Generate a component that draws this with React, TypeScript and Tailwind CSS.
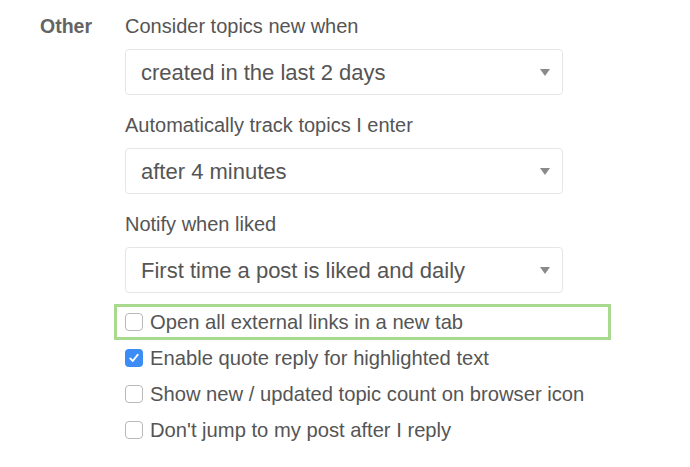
import React from "react";

const selects = [
  { label: "Consider topics new when", value: "created in the last 2 days" },
  { label: "Automatically track topics I enter", value: "after 4 minutes" },
  { label: "Notify when liked", value: "First time a post is liked and daily" },
];

const checks = [
  { text: "Open all external links in a new tab", checked: false, highlight: true },
  { text: "Enable quote reply for highlighted text", checked: true },
  { text: "Show new / updated topic count on browser icon", checked: false },
  { text: "Don't jump to my post after I reply", checked: false },
];

const Box = ({ checked }: { checked: boolean }) =>
  checked ? (
    <span className="w-[18px] h-[18px] rounded-[4px] bg-[#3b8cf5] flex items-center justify-center shrink-0">
      <svg width="12" height="12" viewBox="0 0 12 12" fill="none">
        <path d="M2.2 6.4 L4.8 9 L9.8 2.6" stroke="white" strokeWidth="1.8" strokeLinecap="round" strokeLinejoin="round" />
      </svg>
    </span>
  ) : (
    <span className="w-[18px] h-[18px] rounded-[4px] border border-[#b8b8b8] bg-white shrink-0" />
  );

export default function App() {
  return (
    <div className="w-[690px] h-[467px] bg-white text-[#555] overflow-hidden" style={{ fontFamily: '"Liberation Sans", Arial, sans-serif' }}>
      <div className="flex pt-[14px]">
        <div className="w-[125px] pl-[40px] text-[19.5px] leading-[24px] font-bold text-[#646464]">Other</div>
        <div className="flex flex-col">
          {selects.map((s, i) => (
            <div key={s.label} className={i > 0 ? "mt-[18px]" : ""}>
              <div className="text-[20px] leading-[24px]">{s.label}</div>
              <div className="mt-[11px] w-[438px] h-[46px] border border-[#e6e6e6] rounded-[4px] flex items-center justify-between pl-[15px] pr-[12px]">
                <span className="text-[22px] text-[#555]">{s.value}</span>
                <svg width="10" height="7" viewBox="0 0 10 7">
                  <path d="M0 0 H10 L5 7 Z" fill="#8a8a8a" />
                </svg>
              </div>
            </div>
          ))}
          <div className="mt-[11px] flex flex-col">
            {checks.map((c) => (
              <div
                key={c.text}
                className={`h-[36px] flex items-center gap-[7px] ${
                  c.highlight ? "border-[3px] border-[#a8d98e] -ml-[11px] pl-[8px] w-[497px]" : ""
                }`}
              >
                <Box checked={c.checked} />
                <span className="text-[20.2px] leading-[24px]">{c.text}</span>
              </div>
            ))}
          </div>
        </div>
      </div>
    </div>
  );
}
